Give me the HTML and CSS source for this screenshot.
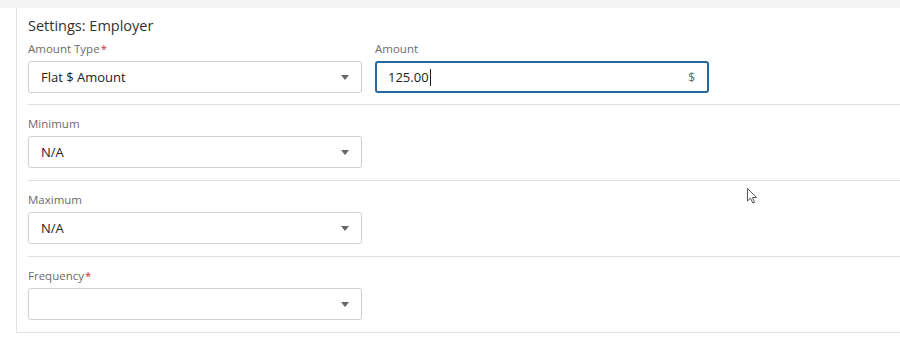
FILE: index.html
```html
<!DOCTYPE html>
<html lang="en">
<head>
<meta charset="UTF-8">
<title>Settings: Employer</title>
<link rel="stylesheet" href="styles.css">
</head>
<body>
<div class="topbar"></div>

<div class="page">
  <div class="panel">
    <h3 class="panel-title">Settings: Employer</h3>

    <!-- amount type + amount -->
    <div class="row">
      <div class="field">
        <label class="label">Amount Type<span class="req">*</span></label>
        <div class="select">
          <span class="value">Flat $ Amount</span>
          <span class="caret"></span>
        </div>
      </div>
      <div class="field">
        <label class="label">Amount</label>
        <div class="input focused">
          <span class="value">125.00<span class="text-caret"></span></span>
          <span class="suffix">$</span>
        </div>
      </div>
    </div>

    <div class="row">
      <div class="field">
        <label class="label">Minimum</label>
        <div class="select">
          <span class="value">N/A</span>
          <span class="caret"></span>
        </div>
      </div>
    </div>

    <div class="row">
      <div class="field">
        <label class="label">Maximum</label>
        <div class="select">
          <span class="value">N/A</span>
          <span class="caret"></span>
        </div>
      </div>
    </div>

    <div class="row last">
      <div class="field">
        <label class="label">Frequency<span class="req">*</span></label>
        <div class="select">
          <span class="value"></span>
          <span class="caret"></span>
        </div>
      </div>
    </div>
  </div>
</div>

<!-- mouse pointer -->
<svg class="pointer" width="14" height="18" viewBox="0 0 14 18">
  <path d="M1.5 1.5 L1.5 14 L4.5 11.2 L6.8 16 L8.6 15.2 L6.4 10.6 L10.5 10.4 Z" fill="#fff" stroke="#555" stroke-width="1" stroke-linejoin="round"/>
</svg>
</body>
</html>
```

FILE: styles.css
```css
body {
  margin: 0;
  background: #fff;
  font-family: 'Open Sans', 'Noto Sans', sans-serif;
  color: #333;
  overflow: hidden;
}

.topbar {
  height: 8px;
  background: #f4f4f4;
}

.page {
  padding-left: 16px;
}

.panel {
  border-left: 1px solid #e3e3e3;
  border-bottom: 1px solid #e3e3e3;
  padding: 8px 0 0 11px;
}

.panel-title {
  margin: 0 0 5px;
  font-size: 14.5px;
  line-height: 20px;
  font-weight: 400;
  color: #333;
}

.row {
  display: flex;
  gap: 13px;
  padding: 0 0 11px;
  border-bottom: 1px solid #e0e0e0;
}

.row + .row {
  padding-top: 11px;
  padding-bottom: 12px;
}

.row.last {
  border-bottom: none;
  padding-bottom: 12px;
}

.field {
  width: 334px;
  display: flex;
  flex-direction: column;
}

.label {
  font-size: 11.5px;
  line-height: 16px;
  color: #6b6b6b;
  margin-bottom: 4px;
}

.req {
  color: #d4302b;
  margin-left: 1px;
}

.select,
.input {
  box-sizing: border-box;
  height: 32px;
  border: 1px solid #cfcfcf;
  border-radius: 3px;
  display: flex;
  align-items: center;
  justify-content: space-between;
  padding: 0 11px 0 12px;
  font-size: 13px;
  color: #222;
}

.input.focused {
  border: 2px solid #25679c;
  padding: 0 11px 0 11px;
}

.value {
  display: flex;
  align-items: center;
}

.text-caret {
  display: inline-block;
  width: 1px;
  height: 17px;
  background: #222;
  margin-left: 1px;
}

.suffix {
  color: #666;
  font-size: 12px;
  margin-right: 1px;
}

.caret {
  width: 0;
  height: 0;
  border-left: 4.5px solid transparent;
  border-right: 4.5px solid transparent;
  border-top: 5px solid #666;
  margin-right: 1px;
}

.pointer {
  position: absolute;
  left: 746px;
  top: 187px;
}
```
